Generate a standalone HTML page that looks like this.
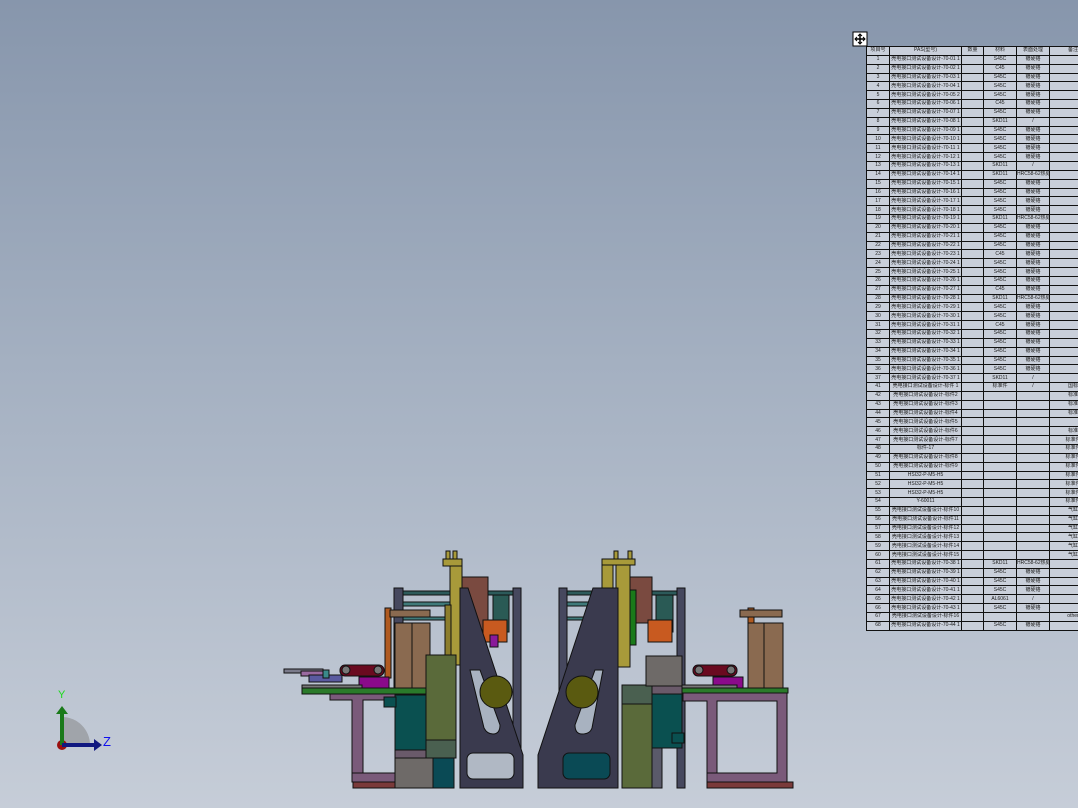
<!DOCTYPE html>
<html><head><meta charset="utf-8"><style>
html,body{margin:0;padding:0}
body{width:1078px;height:808px;overflow:hidden;position:relative;background:linear-gradient(180deg,#8796ac 0%,#a4b0c1 45%,#c6cdd8 100%);font-family:"Liberation Sans","Noto Sans CJK SC",sans-serif}
#tb{position:absolute;left:866px;top:46px;border-collapse:collapse;background:#c9cfda;table-layout:fixed;width:230px}
#tb td{border:1px solid #111;height:7.85px;padding:0;font-size:5px;line-height:7px;color:#222;white-space:nowrap;overflow:hidden;text-align:center}
svg{position:absolute;left:0;top:0}
</style></head><body>
<table id="tb"><colgroup><col style="width:23px"><col style="width:72px"><col style="width:22px"><col style="width:33px"><col style="width:33px"><col style="width:47px"></colgroup>
<tr><td>项目号</td><td>PAS(型号)</td><td>数量</td><td>材料</td><td>表面处理</td><td>备注</td></tr>
<tr><td>1</td><td>壳电接口测试设备设计-70-01 1</td><td></td><td>S45C</td><td>镀硬铬</td><td></td></tr>
<tr><td>2</td><td>壳电接口测试设备设计-70-02 1</td><td></td><td>C45</td><td>镀硬铬</td><td></td></tr>
<tr><td>3</td><td>壳电接口测试设备设计-70-03 1</td><td></td><td>S45C</td><td>镀硬铬</td><td></td></tr>
<tr><td>4</td><td>壳电接口测试设备设计-70-04 1</td><td></td><td>S45C</td><td>镀硬铬</td><td></td></tr>
<tr><td>5</td><td>壳电接口测试设备设计-70-05 2</td><td></td><td>S45C</td><td>镀硬铬</td><td></td></tr>
<tr><td>6</td><td>壳电接口测试设备设计-70-06 1</td><td></td><td>C45</td><td>镀硬铬</td><td></td></tr>
<tr><td>7</td><td>壳电接口测试设备设计-70-07 1</td><td></td><td>S45C</td><td>镀硬铬</td><td></td></tr>
<tr><td>8</td><td>壳电接口测试设备设计-70-08 1</td><td></td><td>SKD11</td><td>/</td><td></td></tr>
<tr><td>9</td><td>壳电接口测试设备设计-70-09 1</td><td></td><td>S45C</td><td>镀硬铬</td><td></td></tr>
<tr><td>10</td><td>壳电接口测试设备设计-70-10 1</td><td></td><td>S45C</td><td>镀硬铬</td><td></td></tr>
<tr><td>11</td><td>壳电接口测试设备设计-70-11 1</td><td></td><td>S45C</td><td>镀硬铬</td><td></td></tr>
<tr><td>12</td><td>壳电接口测试设备设计-70-12 1</td><td></td><td>S45C</td><td>镀硬铬</td><td></td></tr>
<tr><td>13</td><td>壳电接口测试设备设计-70-13 1</td><td></td><td>SKD11</td><td>/</td><td></td></tr>
<tr><td>14</td><td>壳电接口测试设备设计-70-14 1</td><td></td><td>SKD11</td><td>HRC58-62热处理</td><td></td></tr>
<tr><td>15</td><td>壳电接口测试设备设计-70-15 1</td><td></td><td>S45C</td><td>镀硬铬</td><td></td></tr>
<tr><td>16</td><td>壳电接口测试设备设计-70-16 1</td><td></td><td>S45C</td><td>镀硬铬</td><td></td></tr>
<tr><td>17</td><td>壳电接口测试设备设计-70-17 1</td><td></td><td>S45C</td><td>镀硬铬</td><td></td></tr>
<tr><td>18</td><td>壳电接口测试设备设计-70-18 1</td><td></td><td>S45C</td><td>镀硬铬</td><td></td></tr>
<tr><td>19</td><td>壳电接口测试设备设计-70-19 1</td><td></td><td>SKD11</td><td>HRC58-62热处理</td><td></td></tr>
<tr><td>20</td><td>壳电接口测试设备设计-70-20 1</td><td></td><td>S45C</td><td>镀硬铬</td><td></td></tr>
<tr><td>21</td><td>壳电接口测试设备设计-70-21 1</td><td></td><td>S45C</td><td>镀硬铬</td><td></td></tr>
<tr><td>22</td><td>壳电接口测试设备设计-70-22 1</td><td></td><td>S45C</td><td>镀硬铬</td><td></td></tr>
<tr><td>23</td><td>壳电接口测试设备设计-70-23 1</td><td></td><td>C45</td><td>镀硬铬</td><td></td></tr>
<tr><td>24</td><td>壳电接口测试设备设计-70-24 1</td><td></td><td>S45C</td><td>镀硬铬</td><td></td></tr>
<tr><td>25</td><td>壳电接口测试设备设计-70-25 1</td><td></td><td>S45C</td><td>镀硬铬</td><td></td></tr>
<tr><td>26</td><td>壳电接口测试设备设计-70-26 1</td><td></td><td>S45C</td><td>镀硬铬</td><td></td></tr>
<tr><td>27</td><td>壳电接口测试设备设计-70-27 1</td><td></td><td>C45</td><td>镀硬铬</td><td></td></tr>
<tr><td>28</td><td>壳电接口测试设备设计-70-28 1</td><td></td><td>SKD11</td><td>HRC58-62热处理</td><td></td></tr>
<tr><td>29</td><td>壳电接口测试设备设计-70-29 1</td><td></td><td>S45C</td><td>镀硬铬</td><td></td></tr>
<tr><td>30</td><td>壳电接口测试设备设计-70-30 1</td><td></td><td>S45C</td><td>镀硬铬</td><td></td></tr>
<tr><td>31</td><td>壳电接口测试设备设计-70-31 1</td><td></td><td>C45</td><td>镀硬铬</td><td></td></tr>
<tr><td>32</td><td>壳电接口测试设备设计-70-32 1</td><td></td><td>S45C</td><td>镀硬铬</td><td></td></tr>
<tr><td>33</td><td>壳电接口测试设备设计-70-33 1</td><td></td><td>S45C</td><td>镀硬铬</td><td></td></tr>
<tr><td>34</td><td>壳电接口测试设备设计-70-34 1</td><td></td><td>S45C</td><td>镀硬铬</td><td></td></tr>
<tr><td>35</td><td>壳电接口测试设备设计-70-35 1</td><td></td><td>S45C</td><td>镀硬铬</td><td></td></tr>
<tr><td>36</td><td>壳电接口测试设备设计-70-36 1</td><td></td><td>S45C</td><td>镀硬铬</td><td></td></tr>
<tr><td>37</td><td>壳电接口测试设备设计-70-37 1</td><td></td><td>SKD11</td><td>/</td><td></td></tr>
<tr><td>41</td><td>壳电接口测试设备设计-标件 1</td><td></td><td>标准件</td><td>/</td><td>国标</td></tr>
<tr><td>42</td><td>壳电接口测试设备设计-标件2</td><td></td><td></td><td></td><td>标准</td></tr>
<tr><td>43</td><td>壳电接口测试设备设计-标件3</td><td></td><td></td><td></td><td>标准</td></tr>
<tr><td>44</td><td>壳电接口测试设备设计-标件4</td><td></td><td></td><td></td><td>标准</td></tr>
<tr><td>45</td><td>壳电接口测试设备设计-标件5</td><td></td><td></td><td></td><td></td></tr>
<tr><td>46</td><td>壳电接口测试设备设计-标件6</td><td></td><td></td><td></td><td>标准</td></tr>
<tr><td>47</td><td>壳电接口测试设备设计-标件7</td><td></td><td></td><td></td><td>标准件</td></tr>
<tr><td>48</td><td>标件-17</td><td></td><td></td><td></td><td>标准件</td></tr>
<tr><td>49</td><td>壳电接口测试设备设计-标件8</td><td></td><td></td><td></td><td>标准件</td></tr>
<tr><td>50</td><td>壳电接口测试设备设计-标件9</td><td></td><td></td><td></td><td>标准件</td></tr>
<tr><td>51</td><td>HSI32-P-M5-H5</td><td></td><td></td><td></td><td>标准件</td></tr>
<tr><td>52</td><td>HSI32-P-M5-H5</td><td></td><td></td><td></td><td>标准件</td></tr>
<tr><td>53</td><td>HSI32-P-M5-H5</td><td></td><td></td><td></td><td>标准件</td></tr>
<tr><td>54</td><td>Y-60011</td><td></td><td></td><td></td><td>标准件</td></tr>
<tr><td>55</td><td>壳电接口测试设备设计-标件10</td><td></td><td></td><td></td><td>气缸</td></tr>
<tr><td>56</td><td>壳电接口测试设备设计-标件11</td><td></td><td></td><td></td><td>气缸</td></tr>
<tr><td>57</td><td>壳电接口测试设备设计-标件12</td><td></td><td></td><td></td><td>气缸</td></tr>
<tr><td>58</td><td>壳电接口测试设备设计-标件13</td><td></td><td></td><td></td><td>气缸</td></tr>
<tr><td>59</td><td>壳电接口测试设备设计-标件14</td><td></td><td></td><td></td><td>气缸</td></tr>
<tr><td>60</td><td>壳电接口测试设备设计-标件15</td><td></td><td></td><td></td><td>气缸</td></tr>
<tr><td>61</td><td>壳电接口测试设备设计-70-38 1</td><td></td><td>SKD11</td><td>HRC58-62热处理</td><td></td></tr>
<tr><td>62</td><td>壳电接口测试设备设计-70-39 1</td><td></td><td>S45C</td><td>镀硬铬</td><td></td></tr>
<tr><td>63</td><td>壳电接口测试设备设计-70-40 1</td><td></td><td>S45C</td><td>镀硬铬</td><td></td></tr>
<tr><td>64</td><td>壳电接口测试设备设计-70-41 1</td><td></td><td>S45C</td><td>镀硬铬</td><td></td></tr>
<tr><td>65</td><td>壳电接口测试设备设计-70-42 1</td><td></td><td>AL6061</td><td>/</td><td></td></tr>
<tr><td>66</td><td>壳电接口测试设备设计-70-43 1</td><td></td><td>S45C</td><td>镀硬铬</td><td></td></tr>
<tr><td>67</td><td>壳电接口测试设备设计-标件16</td><td></td><td></td><td></td><td>other</td></tr>
<tr><td>68</td><td>壳电接口测试设备设计-70-44 1</td><td></td><td>S45C</td><td>镀硬铬</td><td></td></tr>
</table>
<svg width="1078" height="808" viewBox="0 0 1078 808">
<rect x="853" y="32" width="14" height="14" fill="#fff" stroke="#000"/>
<path d="M860 34v10M855 39h10" stroke="#000" stroke-width="1.5"/>
<path d="M858 36l2-2 2 2M858 42l2 2 2-2M857 37l-2 2 2 2M863 37l2 2-2 2" stroke="#000" fill="none"/>
<path d="M62 745 L62 717 A28 28 0 0 1 90 745 Z" fill="#a0a4aa"/>
<circle cx="62" cy="745" r="5" fill="#9a1010"/>
<rect x="60" y="712" width="4" height="33" fill="#1a7a1a"/>
<path d="M56 714 L62 706 L68 714Z" fill="#1a7a1a"/>
<rect x="62" y="743" width="34" height="4" fill="#101880"/>
<path d="M94 739 L102 745 L94 751Z" fill="#101880"/>
<text x="58" y="698" font-size="11" fill="#1adb1a" font-family="Liberation Sans">Y</text>
<text x="103" y="746" font-size="13" fill="#1010ee" font-family="Liberation Sans">Z</text>
<g stroke="#111" stroke-width="1">
<rect x="394" y="588" width="9" height="100" fill="#46485e"/>
<rect x="403" y="591" width="110" height="4" fill="#2c5a5a"/>
<rect x="403" y="602" width="60" height="4" fill="#3f7a7a"/>
<rect x="403" y="617" width="60" height="3" fill="#3f7a7a"/>
<rect x="513" y="588" width="8" height="200" fill="#46485e"/>
<rect x="462" y="577" width="26" height="53" fill="#7a4a40"/>
<rect x="493" y="595" width="16" height="37" fill="#2a5a55"/>
<rect x="483" y="620" width="24" height="22" fill="#c85a20"/>
<rect x="490" y="635" width="8" height="12" fill="#8a1a9a"/>
<rect x="450" y="560" width="12" height="105" fill="#a89a3a"/>
<rect x="443" y="559" width="19" height="7" fill="#a89a3a"/>
<rect x="446" y="551" width="4" height="8" fill="#a89a3a"/>
<rect x="453" y="551" width="4" height="8" fill="#a89a3a"/>
<rect x="445" y="605" width="6" height="60" fill="#8c7d2c"/>
<rect x="385" y="608" width="6" height="70" fill="#b05a20"/>
<rect x="390" y="610" width="40" height="7" fill="#8a6a50"/>
<rect x="395" y="623" width="35" height="65" fill="#8a6a50"/>
<path d="M412 623v65" />
<rect x="340" y="665" width="44" height="11" rx="5" fill="#6a0a20"/>
<circle cx="346" cy="670" r="4" fill="#777"/><circle cx="378" cy="670" r="4" fill="#777"/>
<rect x="359" y="677" width="30" height="11" fill="#8a0a8a"/>
<rect x="284" y="669" width="39" height="4" fill="#7a7a8a"/>
<rect x="301" y="671" width="22" height="5" fill="#9a6aa0"/>
<rect x="309" y="675" width="33" height="7" fill="#5a5aa0"/>
<rect x="323" y="670" width="6" height="8" fill="#3a8a8a"/>
<rect x="302" y="685" width="60" height="3" fill="#777"/>
<rect x="302" y="688" width="125" height="6" fill="#2a7a2a"/>
<path d="M330 694 H427 V782 H352 V773 L397 773 V700 H363 V773 H352 V700 L330 700Z" fill="#7a5a7a"/>
<rect x="353" y="782" width="100" height="6" fill="#7a3a3a"/>
<rect x="395" y="695" width="32" height="62" fill="#0a5050"/>
<rect x="384" y="697" width="12" height="10" fill="#0a5050"/>
<rect x="395" y="750" width="31" height="8" fill="#6a5a6a"/>
<rect x="395" y="758" width="38" height="30" fill="#6e6a68"/>
<rect x="426" y="655" width="30" height="85" fill="#5a6a3a"/>
<rect x="426" y="740" width="30" height="18" fill="#4a6050"/>
<rect x="433" y="758" width="21" height="30" fill="#0a4a55"/>
<path d="M460 588 L468 588 L523 755 L523 788 L460 788Z" fill="#3a3a4e"/>
<path d="M470 670 L480 670 L500 725 Q500 734 493 734 Q487 734 484 728Z" fill="#a8b2c0"/>
<circle cx="496" cy="692" r="16" fill="#5a5a10"/>
<rect x="467" y="753" width="47" height="26" rx="6" fill="#b0b8c4"/>
<rect x="559" y="588" width="8" height="200" fill="#46485e"/>
<rect x="567" y="591" width="110" height="4" fill="#2c5a5a"/>
<rect x="567" y="602" width="60" height="4" fill="#3f7a7a"/>
<rect x="567" y="617" width="60" height="3" fill="#3f7a7a"/>
<rect x="677" y="588" width="8" height="200" fill="#46485e"/>
<rect x="628" y="577" width="24" height="46" fill="#7a4a40"/>
<rect x="656" y="595" width="17" height="37" fill="#2a5a55"/>
<rect x="648" y="620" width="24" height="22" fill="#c85a20"/>
<rect x="625" y="610" width="8" height="28" fill="#8a1a9a"/>
<rect x="602" y="559" width="33" height="6" fill="#a89a3a"/>
<rect x="602" y="565" width="11" height="102" fill="#a89a3a"/>
<rect x="616" y="565" width="14" height="102" fill="#a89a3a"/>
<rect x="614" y="551" width="4" height="8" fill="#a89a3a"/>
<rect x="628" y="551" width="4" height="8" fill="#a89a3a"/>
<rect x="594" y="590" width="8" height="55" fill="#1a7a1a"/>
<rect x="630" y="590" width="6" height="55" fill="#1a7a1a"/>
<path d="M538 788 L538 755 L593 588 L618 588 L618 788Z" fill="#3a3a4e"/>
<path d="M603 670 L595 670 L575 725 Q575 734 582 734 Q590 734 592 728Z" fill="#a8b2c0"/>
<circle cx="582" cy="692" r="16" fill="#5a5a10"/>
<rect x="563" y="753" width="47" height="26" rx="6" fill="#0a4a55"/>
<rect x="622" y="685" width="30" height="103" fill="#5a6a3a"/>
<rect x="622" y="685" width="30" height="19" fill="#4a6050"/>
<rect x="646" y="656" width="36" height="30" fill="#6e6a68"/>
<rect x="652" y="686" width="30" height="8" fill="#6a5a6a"/>
<rect x="652" y="694" width="30" height="54" fill="#0a5050"/>
<rect x="672" y="733" width="12" height="10" fill="#0a5050"/>
<rect x="652" y="748" width="10" height="40" fill="#5a5a6a"/>
<rect x="748" y="608" width="6" height="70" fill="#b05a20"/>
<rect x="740" y="610" width="42" height="7" fill="#8a6a50"/>
<rect x="748" y="623" width="35" height="65" fill="#8a6a50"/>
<path d="M764 623v65"/>
<rect x="693" y="665" width="44" height="11" rx="5" fill="#6a0a20"/>
<circle cx="699" cy="670" r="4" fill="#777"/><circle cx="731" cy="670" r="4" fill="#777"/>
<rect x="713" y="677" width="30" height="11" fill="#8a0a8a"/>
<rect x="682" y="685" width="55" height="3" fill="#777"/>
<rect x="682" y="688" width="106" height="5" fill="#2a7a2a"/>
<path d="M683 693 H787 V782 H707 V773 L750 773 H777 V701 H717 V773 H707 V701 L683 701Z" fill="#7a5a7a"/>
<rect x="707" y="782" width="86" height="6" fill="#7a3a3a"/>
</g>
</svg>
</body></html>
